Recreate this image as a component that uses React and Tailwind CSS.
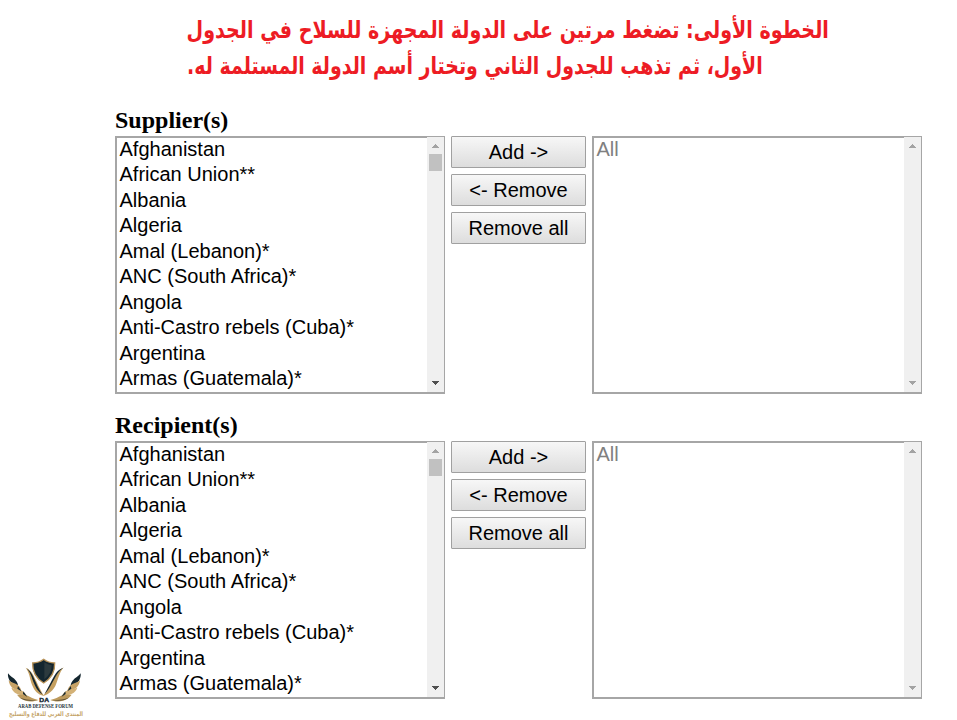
import { useState } from "react";

const countries = [
  "Afghanistan",
  "African Union**",
  "Albania",
  "Algeria",
  "Amal (Lebanon)*",
  "ANC (South Africa)*",
  "Angola",
  "Anti-Castro rebels (Cuba)*",
  "Argentina",
  "Armas (Guatemala)*",
];

function Arrow({ down, color }) {
  return (
    <svg width="7" height="4" viewBox="0 0 7 4" fill={color} shapeRendering="crispEdges">
      {down ? <path d="M0 0h7v1H6v1H5v1H4v1H3V3H2V2H1V1H0z" /> : <path d="M3 0h1v1h1v1h1v1h1v1H0V3h1V2h1V1h1z" />}
    </svg>
  );
}

function ListBox({ items, muted, onPick }) {
  return (
    <div className="flex h-[258px] w-[330px] border-2 border-r border-[#a6a6a6] bg-white">
      <ul className={`-mt-[1.25px] flex-1 pl-[2.5px] text-[20px] leading-[25.5px] ${muted ? "text-[#808080]" : "text-black"}`}>
        {items.map((item) => (
          <li key={item} onDoubleClick={() => onPick(item)} className="h-[25.5px] cursor-default whitespace-nowrap select-none">
            {item}
          </li>
        ))}
      </ul>
      <div className="-mt-px flex w-[17px] flex-col items-center bg-[#f0f0f0] pt-[7px] pb-[7px]">
        <Arrow color="#a3a3a3" />
        {!muted && <div className="mt-[6px] h-[17px] w-[13px] bg-[#c1c1c1]" />}
        <div className="mt-auto flex">
          <Arrow down color={muted ? "#a3a3a3" : "#505050"} />
        </div>
      </div>
    </div>
  );
}

function PushButton({ children, onClick }) {
  return (
    <button
      onClick={onClick}
      className="h-8 w-[135px] rounded-[1px] border border-[#a0a0a0] bg-linear-to-b from-[#f7f7f7] to-[#dddddd] text-[20px] leading-[30px] text-black"
    >
      {children}
    </button>
  );
}

function Picker({ title }) {
  const [chosen, setChosen] = useState([]);
  const add = (item) => setChosen((prev) => (prev.includes(item) ? prev : [...prev, item]));

  return (
    <section className="h-[305px]">
      <h2 className="h-[31px] font-['Liberation_Serif',serif] text-[24px] leading-[31px] font-bold text-black">{title}</h2>
      <div className="flex gap-[6px]">
        <ListBox items={countries} onPick={add} />
        <div className="flex flex-col gap-[6px]">
          <PushButton onClick={() => add(countries[0])}>Add -&gt;</PushButton>
          <PushButton onClick={() => setChosen((prev) => prev.slice(0, -1))}>&lt;- Remove</PushButton>
          <PushButton onClick={() => setChosen([])}>Remove all</PushButton>
        </div>
        <ListBox items={chosen.length ? chosen : ["All"]} muted onPick={() => {}} />
      </div>
    </section>
  );
}

function Wing() {
  return (
    <g>
      <path d="M24 70c6 9 17 13 24 22 4 5 6 10 6 16-9-6-19-8-25-16-4-7-6-14-5-22z" fill="#14262f" />
      <path d="M26 91c7 7 19 8 28 15 6 5 9 11 10 18-9-5-19-5-27-11-6-5-10-12-11-22z" fill="#c6a266" />
      <path d="M34 113c10 4 22 2 32 9 8 5 13 11 16 18-12-5-22-3-32-9-8-4-13-10-16-18z" fill="#d3b176" />
      <path d="M51 134c10 2 21-2 32 3 8 4 17 9 32 13-12 5-26 6-38 2-11-3-20-9-26-18z" fill="#bd9a5c" />
      <path d="M54 108l10 16-12-8zM70 124l12 17-13-9z" fill="#14262f" />
      <path d="M57 141c13 8 30 9 52 9-16 4-38 4-52-9z" fill="#5d5034" />
    </g>
  );
}

function Logo() {
  return (
    <svg width="100" height="70" viewBox="0 0 300 210" className="block">
      <Wing />
      <g transform="translate(266 0) scale(-1 1)">
        <Wing />
      </g>
      <path d="M131 28c10 8 20 11 33 11 1 25-8 45-33 60-25-15-34-35-33-60 13 0 23-3 33-11z" fill="#14262f" stroke="#b8935a" strokeWidth="4" />
      <path d="M133 37c7 5 15 8 22 8 0 18-7 31-22 43z" fill="#2c3a3e" />
      <path d="M77 53c17 7 25 25 33 43 7 15 13 28 22 42-20-5-29-17-36-34-7-19-7-36-19-51z" fill="#c5a061" />
      <path d="M191 52c-18 11-27 30-37 48-7 13-13 23-25 38 20-6 30-17 37-30 9-20 11-39 25-56z" fill="#c5a061" />
      <path d="M80 55c14 9 20 26 28 43 5 13 12 25 20 36-16-12-22-24-28-39-6-16-9-28-20-40zM190 53c-16 10-25 31-34 47-7 13-12 22-22 32 10-18 14-26 20-38 9-17 16-34 36-41z" fill="#14262f" />
      <text x="118" y="155" textLength="29" lengthAdjust="spacingAndGlyphs" fill="#14262f" stroke="#14262f" className="font-['Liberation_Sans',sans-serif] text-[17px] font-bold">
        DA
      </text>
      <text x="54" y="173" textLength="165" lengthAdjust="spacingAndGlyphs" fill="#26343a" className="font-['Liberation_Serif',serif] text-[18px] font-bold">
        ARAB DEFENSE FORUM
      </text>
      <text x="138" y="197" textAnchor="middle" direction="rtl" textLength="222" lengthAdjust="spacingAndGlyphs" fill="#c5a469" className="font-['DejaVu_Sans',sans-serif] text-[19px] font-bold">
        المنتدى العربي للدفاع والتسليح
      </text>
    </svg>
  );
}

export default function App() {
  return (
    <main className="relative h-[720px] w-[957px] overflow-hidden bg-white font-['Liberation_Sans',Arial,sans-serif]">
      <header
        dir="rtl"
        className="flex h-[105px] flex-col items-start pt-[12px] pr-[128px] font-['DejaVu_Sans',sans-serif] text-[24px] leading-[36px] font-bold whitespace-nowrap text-[#ed1c24]"
      >
        <p className="origin-right scale-x-[0.796]">الخطوة الأولى: تضغط مرتين على الدولة المجهزة للسلاح في الجدول</p>
        <p className="mr-[66px] origin-right scale-x-[0.79]">الأول، ثم تذهب للجدول الثاني وتختار أسم الدولة المستلمة له.</p>
      </header>
      <div className="pl-[115px]">
        <Picker title="Supplier(s)" />
        <Picker title="Recipient(s)" />
      </div>
      <div className="absolute bottom-0 left-0">
        <Logo />
      </div>
    </main>
  );
}
